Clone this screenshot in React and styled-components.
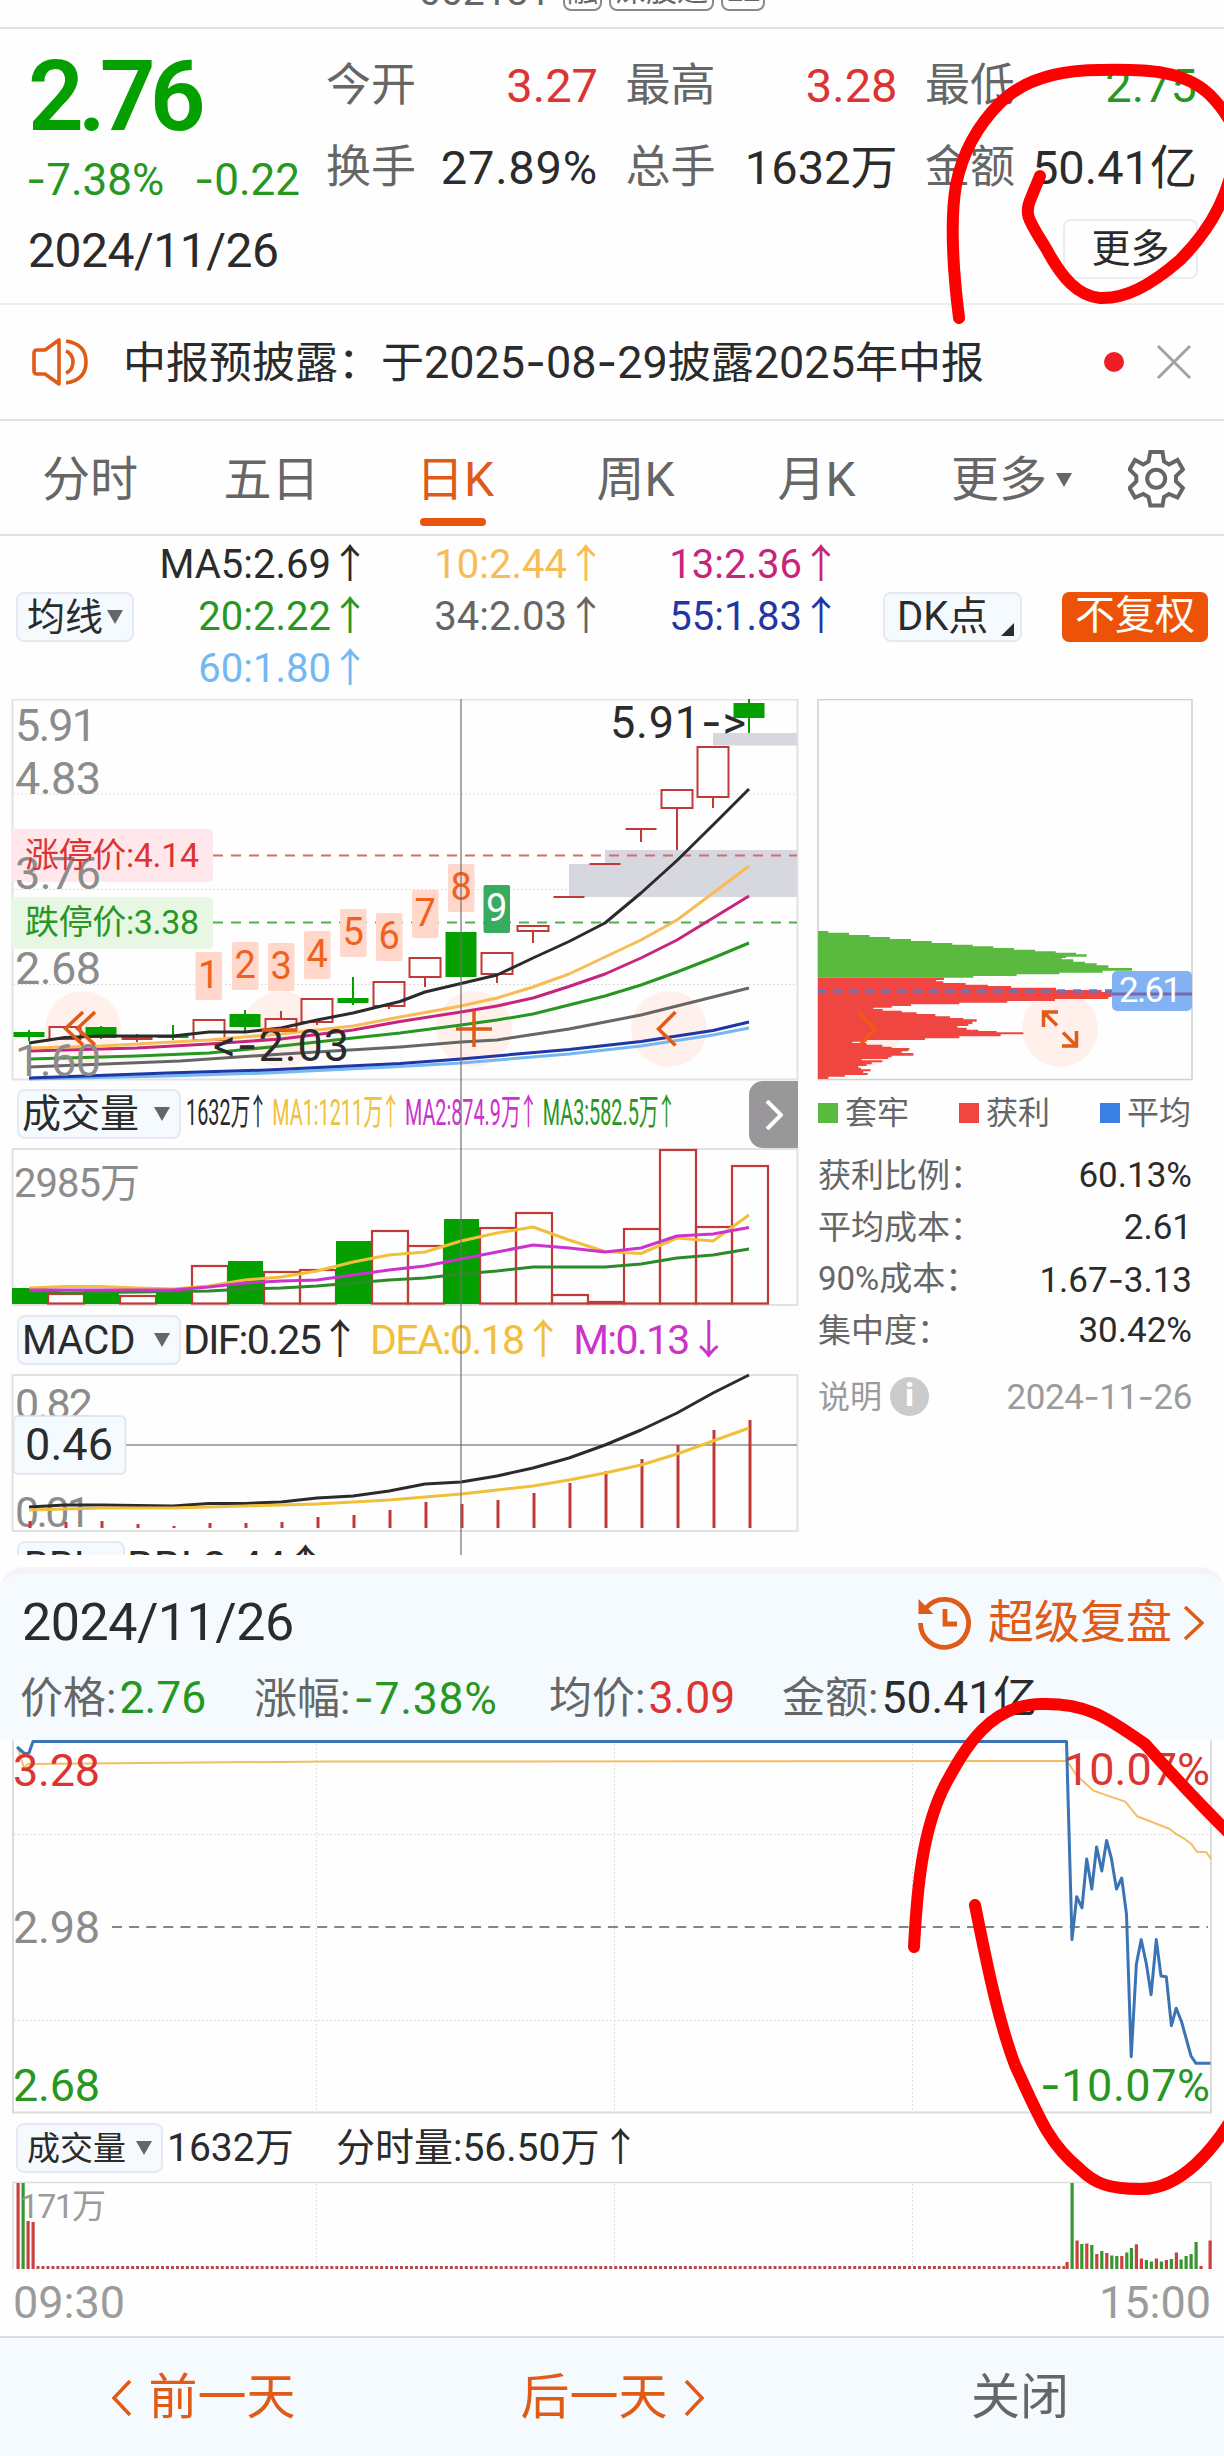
import React from "react";
import styled, { createGlobalStyle } from "styled-components";

const font = `Roboto, "Noto Sans CJK SC", sans-serif`;

const color = {
  text: "#2b2b2b",
  label: "#666666",
  faint: "#9b9b9b",
  red: "#dc3432",
  barRed: "#bf3a38",
  green: "#27971f",
  solidGreen: "#03a000",
  orange: "#e05a18",
  yellow: "#f0c03a",
  amber: "#f7bc55",
  magenta: "#c8247c",
  purple: "#cc33cc",
  navy: "#1f36a4",
  sky: "#72b8f2",
  frame: "#e2e2e2",
  panel: "#f5faff",
};

const GlobalStyle = createGlobalStyle`
  body {
    margin: 0;
    background-color: #fefefe;
    font-family: ${font};
    color: ${color.text};
  }
`;

const Page = styled.div`
  position: relative;
  width: 1224px;
  height: 2456px;
  overflow: hidden;
  white-space: nowrap;
  line-height: 1.2;
`;

const Dash = styled.span`
  font-family: Inter, sans-serif;
`;

const TopStrip = styled.div`
  box-sizing: border-box;
  height: 29px;
  border-bottom: 2px solid #e2e2e2;
  overflow: hidden;
`;

const CodeRow = styled.div`
  display: flex;
  align-items: center;
  gap: 7px;
  height: 38px;
  margin-top: -27px;
  padding-left: 419px;
  color: ${color.label};
`;

const StockCode = styled.div`
  width: 137px;
  font-size: 39px;
`;

const CodeTag = styled.div`
  box-sizing: border-box;
  width: ${(props) => props.$width}px;
  height: 38px;
  border: 2px solid #8a8a8a;
  border-radius: 8px;
  text-align: center;
  font-size: 31px;
  line-height: 32px;
`;

const QuoteSection = styled.div`
  box-sizing: border-box;
  display: flex;
  height: 276px;
  border-bottom: 2px solid #efefef;
`;

const QuoteLeft = styled.div`
  box-sizing: border-box;
  width: 326px;
  padding: 17px 0 0 28px;
`;

const Price = styled.div`
  height: 100px;
  line-height: 102px;
  font-size: 98px;
  font-weight: 600;
  letter-spacing: -6px;
  color: ${color.solidGreen};
`;

const Change = styled.div`
  display: flex;
  justify-content: space-between;
  width: 274px;
  height: 60px;
  margin: 4px 0 0 -2px;
  line-height: 59px;
  font-size: 44px;
  color: ${color.green};
`;

const QuoteDate = styled.div`
  height: 60px;
  margin-top: 10px;
  line-height: 61px;
  font-size: 48px;
  letter-spacing: -0.5px;
`;

const QuoteRight = styled.div`
  padding-top: 27px;
`;

const MetricGrid = styled.div`
  display: grid;
  grid-template-columns: 272px 272px 272px;
  column-gap: 27.5px;
  row-gap: 22px;
`;

const Metric = styled.div`
  display: flex;
  justify-content: space-between;
  height: 60px;
  line-height: 60px;
`;

const MetricLabel = styled.div`
  font-size: 45px;
  color: ${color.label};
`;

const MetricValue = styled.div`
  font-size: 47px;
  letter-spacing: ${(props) => props.$spacing || 0}px;
  color: ${(props) => props.$color || color.text};
`;

const MoreButton = styled.div`
  box-sizing: border-box;
  width: 135px;
  height: 60px;
  margin: 21px 0 0 737px;
  border: 2px solid #ececec;
  border-radius: 8px;
  text-align: center;
  line-height: 56px;
  font-size: 39px;
`;

const Notice = styled.div`
  box-sizing: border-box;
  display: flex;
  align-items: center;
  height: 116px;
  padding: 0 32px 0 32px;
  border-bottom: 2px solid #e2e2e2;
`;

const NoticeText = styled.div`
  flex: 1;
  margin-left: 34px;
  font-size: 43px;
`;

const NoticeDigits = styled.span`
  font-size: 45px;
`;

const RedDot = styled.div`
  width: 20px;
  height: 20px;
  margin-right: 32px;
  border-radius: 50%;
  background-color: #f01e24;
`;

const Tabs = styled.div`
  box-sizing: border-box;
  display: flex;
  height: 115px;
  border-bottom: 2px solid #e2e2e2;
`;

const Tab = styled.div`
  display: flex;
  flex-direction: column;
  align-items: center;
  width: ${(props) => props.$width}px;
  font-size: 48px;
  line-height: 60px;
  padding-top: 29px;
  box-sizing: border-box;
  color: ${(props) => (props.$active ? color.orange : color.label)};
`;

const TabLine = styled.div`
  width: 66px;
  height: 8px;
  margin-top: 8px;
  margin-right: 5px;
  border-radius: 4px;
  background-color: #e9530d;
`;

const TabRow = styled.div`
  display: flex;
  align-items: center;
  gap: 9px;
`;

const Triangle = styled.div`
  border-left: 8px solid transparent;
  border-right: 8px solid transparent;
  border-top: 14px solid #666666;
`;

const AverageSection = styled.div`
  display: flex;
  align-items: center;
  box-sizing: border-box;
  height: 163px;
  padding: 3px 0 4px 16px;
`;

const SelectButton = styled.div`
  box-sizing: border-box;
  display: flex;
  align-items: center;
  justify-content: space-between;
  width: ${(props) => props.$width}px;
  height: 50px;
  padding: 0 9px 0 ${(props) => props.$left}px;
  border: 2px solid #e6e9f2;
  border-radius: 8px;
  background-color: ${color.panel};
  font-size: ${(props) => props.$font || 38}px;
  line-height: 45px;
`;

const AverageGrid = styled.div`
  display: grid;
  grid-template-columns: 229px 236px 235px;
  grid-auto-rows: 52px;
  justify-items: end;
`;

const AverageItem = styled.div`
  line-height: 52px;
  font-size: 40px;
  color: ${(props) => props.$color};
`;

const ArrowText = styled.span`
  display: inline-flex;
  justify-content: center;
  width: ${(props) => props.$width || 26}px;
  margin-left: ${(props) => props.$left || 6}px;
  font-family: "Noto Sans CJK SC", sans-serif;
  line-height: 1;
  letter-spacing: 0;
`;

const DkButton = styled.div`
  box-sizing: border-box;
  display: flex;
  align-items: center;
  width: 139px;
  height: 50px;
  margin-left: 49px;
  padding-left: 12px;
  border: 2px solid #e6e9f2;
  border-radius: 8px;
  background-color: ${color.panel};
  font-size: 40px;
`;

const CornerMark = styled.div`
  margin: 24px 0 0 13px;
  border-left: 13px solid transparent;
  border-bottom: 13px solid #2b2b2b;
`;

const AdjustButton = styled.div`
  width: 146px;
  height: 50px;
  margin-left: 40px;
  border-radius: 7px;
  background-color: #ec5308;
  color: #ffffff;
  text-align: center;
  font-size: 40px;
  line-height: 48px;
`;

const ChartSection = styled.div`
  position: relative;
  display: flex;
  height: 856px;
  overflow: hidden;
  padding-left: 12px;
`;

const ChartColumn = styled.div`
  width: 786px;
  flex: none;
`;

const Chart = styled.svg`
  display: block;
  overflow: visible;
`;

const VolumeHead = styled.div`
  display: flex;
  height: 68px;
  padding-left: 5px;
  align-items: flex-start;
`;

const HeadButtonSlot = styled.div`
  padding-top: 9px;
`;

const CondensedRow = styled.div`
  display: flex;
  gap: 16px;
  width: 569px;
  height: 50px;
  margin: 8px 0 0 5px;
  line-height: 50px;
  font-size: 36px;
  transform: scaleX(0.55);
  transform-origin: left center;
`;

const Colored = styled.span`
  color: ${(props) => props.$color};
  margin-right: ${(props) => props.$right || 0}px;
`;

const NextPane = styled.div`
  display: flex;
  align-items: center;
  justify-content: center;
  flex: none;
  width: 49px;
  height: 67px;
  margin: 1px 0 0 -6px;
  border-radius: 14px 0 0 14px;
  background-color: #99979a;
`;

const IndicatorHead = styled.div`
  display: flex;
  height: 50px;
  padding: 9px 0 9px 5px;
  line-height: 50px;
  font-size: ${(props) => props.$font || 43}px;
`;

const IndicatorValues = styled.div`
  padding-left: 2px;
  letter-spacing: ${(props) => props.$spacing || 0}px;
`;

const CrossLine = styled.div`
  position: absolute;
  left: 460px;
  top: 0;
  width: 2px;
  height: 856px;
  background-color: rgba(110, 110, 110, 0.6);
`;

const ChipColumn = styled.div`
  width: 376px;
  margin-left: 19px;
`;

const Legend = styled.div`
  display: flex;
  justify-content: space-between;
  height: 70px;
  padding: 0 2px 0 1px;
`;

const LegendItem = styled.div`
  display: flex;
  align-items: center;
  gap: 7px;
  height: 66px;
  font-size: 32px;
  color: ${color.label};
`;

const LegendSquare = styled.div`
  width: 20px;
  height: 20px;
  background-color: ${(props) => props.$color};
`;

const ChipRow = styled.div`
  display: flex;
  justify-content: space-between;
  height: 51.7px;
  line-height: 52px;
  padding: 0 1px 0 1px;
  font-size: 33px;
  color: ${color.label};
`;

const ChipValue = styled.div`
  font-size: 35px;
  color: ${color.text};
`;

const ChipFoot = styled.div`
  display: flex;
  align-items: center;
  height: 52px;
  margin-top: 14px;
  padding: 0 1px 0 1px;
  font-size: 32px;
  color: ${color.faint};
`;

const InfoIcon = styled.div`
  width: 39px;
  height: 39px;
  margin-left: 8px;
  border-radius: 50%;
  background-color: #cbcbcb;
  color: #ffffff;
  text-align: center;
  font-size: 31px;
  font-weight: 900;
  line-height: 38px;
`;

const ChipDate = styled.div`
  flex: 1;
  text-align: right;
  font-size: 35px;
  letter-spacing: -0.4px;
`;

const Sheet = styled.div`
  margin-top: 12px;
  border-top: 7px solid #f6f3f6;
  border-radius: 24px 24px 0 0;
  background-color: ${color.panel};
`;

const SheetHead = styled.div`
  box-sizing: border-box;
  display: flex;
  align-items: center;
  justify-content: space-between;
  height: 96px;
  padding: 2px 20px 0 22px;
`;

const SheetDate = styled.div`
  font-size: 52px;
  letter-spacing: -0.5px;
`;

const ReplayLink = styled.div`
  display: flex;
  align-items: center;
  font-size: 46px;
  color: ${color.orange};

  span {
    margin: 0 11px 0 16px;
  }
`;

const SheetStats = styled.div`
  display: flex;
  height: 70px;
  padding-left: 20px;
  line-height: 56px;
`;

const SheetStat = styled.div`
  width: ${(props) => props.$width}px;
  font-size: 43px;
  color: ${color.label};
`;

const StatValue = styled.span`
  margin-left: 3px;
  font-size: 44.5px;
  letter-spacing: ${(props) => props.$spacing || 0}px;
  color: ${(props) => props.$color};
`;

const SheetBody = styled.div`
  padding-left: 12px;
  background-color: #fefefe;
`;

const TradeHead = styled.div`
  display: flex;
  align-items: center;
  height: 68px;
  padding-left: 4px;
  font-size: 39px;
  line-height: 48px;
`;

const TradeTotal = styled.div`
  width: 169px;
  margin-left: 4px;
`;

const TimeAxis = styled.div`
  display: flex;
  justify-content: space-between;
  height: 67px;
  padding: 0 13px 0 1px;
  line-height: 68px;
  font-size: 45px;
  color: ${color.faint};
`;

const Footer = styled.div`
  box-sizing: border-box;
  display: flex;
  height: 121px;
  border-top: 2px solid #d8dbdf;
  background-color: ${color.panel};
`;

const FooterButton = styled.div`
  display: flex;
  align-items: center;
  justify-content: center;
  gap: 16px;
  width: 408px;
  height: 119px;
  font-size: 49px;
  line-height: 60px;
  color: ${(props) => props.$color || color.orange};
`;

const Marks = styled.svg`
  position: absolute;
  left: 0;
  top: 0;
  pointer-events: none;
`;

const averages = [
  ["MA5:2.69", color.text],
  ["10:2.44", color.amber],
  ["13:2.36", color.magenta],
  ["20:2.22", color.green],
  ["34:2.03", color.label],
  ["55:1.83", color.navy],
  ["60:1.80", color.sky],
];

// x, body top, body bottom, high, low, kind (g = solid green, r = hollow red, f = filled red)
const candles = [
  [29, 1032, 1037, 1030, 1041, "g"],
  [65, 1027, 1039, 1027, 1039, "r"],
  [101, 1027, 1038, 1026, 1039, "g"],
  [137, 1035, 1040, 1034, 1042, "f"],
  [173, 1035, 1038, 1025, 1040, "g"],
  [209, 1020, 1040, 1020, 1040, "r"],
  [245, 1014, 1027, 1010, 1031, "g"],
  [281, 1019, 1031, 1011, 1031, "r"],
  [317, 999, 1022, 999, 1025, "r"],
  [353, 998, 1003, 977, 1005, "g"],
  [389, 982, 1006, 982, 1009, "r"],
  [425, 958, 977, 958, 987, "r"],
  [461, 932, 977, 932, 977, "g"],
  [497, 953, 974, 953, 983, "r"],
  [533, 926, 931, 926, 943, "r"],
  [569, 896, 898, 896, 898, "f"],
  [605, 863, 865, 863, 865, "f"],
  [641, 828, 830, 828, 842, "f"],
  [677, 790, 808, 790, 850, "r"],
  [713, 747, 797, 747, 808, "r"],
  [749, 703, 718, 699, 733, "g"],
];

const priceLines = [
  [color.sky, "29,1079 167,1076 267,1073 400,1066.5 461,1063 569,1054 641,1046 713,1035 749,1028"],
  [color.navy, "29,1078 167,1073 267,1070 400,1063.5 461,1059 569,1049.5 641,1041.5 713,1030.5 749,1022"],
  ["#666666", "29,1067 180,1061 283,1054 400,1047 461,1042 497,1040 569,1029 641,1015 713,997 749,988"],
  [color.green, "29,1059 137,1056 209,1053 281,1046 353,1038 400,1033 461,1025 497,1020 533,1014 569,1005 605,996 641,985 677,972 713,958 749,943"],
  [color.magenta, "29,1051 137,1048 209,1044 281,1039 353,1030 400,1021.5 461,1012 497,1006 533,998 569,986.5 605,974 641,958 677,940 713,918 749,896"],
  [color.amber, "29,1048 101,1046 209,1040 281,1034 353,1026 400,1017 461,1006 497,998 533,987 569,974 605,957 641,940 677,920 713,893 749,866"],
  [color.text, "29,1043 65,1037.5 101,1036 173,1036 209,1032 245,1032 281,1028 317,1020 353,1013 400,1001.5 425,992 461,983.5 497,975 533,958 569,941.5 605,923 641,893 677,860.5 713,825 749,789"],
];

const counters = [
  [1, 195.5, 952],
  [2, 232, 942],
  [3, 268, 943],
  [4, 304, 931],
  [5, 340, 909],
  [6, 376, 913],
  [7, 412, 890],
  [8, 448, 864],
  [9, 483.5, 885],
];

// volume bars: x, top, kind
const volumes = [
  [29, 1288, "g"], [65, 1294, "r"], [101, 1290, "g"], [137, 1296, "r"],
  [173, 1289, "g"], [209, 1266, "r"], [245, 1261, "g"], [281, 1272, "r"],
  [317, 1270, "r"], [353, 1241, "g"], [389, 1231, "r"], [425, 1246, "r"],
  [461, 1219, "g"], [497, 1228, "r"], [533, 1213, "r"], [569, 1295, "r"],
  [605, 1302, "r"], [641, 1229, "r"], [677, 1150, "r"], [713, 1227, "r"],
  [749, 1166, "r"],
];

const volumeLines = [
  ["#2d8a28", "29,1291 65,1293 137,1292 209,1291 245,1289 281,1288 317,1286 389,1280 425,1278 461,1274 497,1271 533,1267 605,1267 641,1264 677,1258 713,1255 749,1249"],
  [color.yellow, "29,1288 65,1286.5 101,1286.5 137,1288 173,1289 209,1286 245,1280 281,1277 317,1271 353,1262 389,1255 425,1252 461,1241 497,1233 533,1227 569,1240 605,1251.5 641,1253.5 677,1238 713,1241 749,1215"],
  [color.purple, "29,1290 173,1290 209,1287 245,1283 281,1281 317,1280 353,1275 389,1270 425,1266 461,1259 497,1252 533,1245 569,1248 605,1252 641,1248 677,1236 713,1234 749,1227.5"],
];

const macdBars = [
  1521, 1522, 1521, 1524, 1526, 1523, 1523, 1522, 1517, 1515, 1510, 1502,
  1504, 1500, 1493, 1483, 1471, 1459, 1445, 1430, 1420,
];

// chip distribution steps in thirds of a px: bar top, bar end
const chipsGreen = [
  [723, 85], [728, 147], [735, 209], [741, 270], [747, 333], [753, 395],
  [759, 457], [764, 518], [769, 580], [774, 642], [779, 705], [784, 767],
  [788, 828], [793, 860], [800, 798], [804, 785], [808, 820], [815, 855],
  [820, 890], [826, 925], [834, 996], [842, 908], [848, 778], [853, 650],
  [858, 520], [863, 54],
];
const chipsRed = [
  [863, 432], [870, 408], [874, 430], [879, 497], [884, 564], [888, 633],
  [893, 768], [900, 905], [906, 935], [910, 1175], [916, 935], [921, 925],
  [927, 765], [933, 622], [938, 478], [943, 333], [948, 275], [953, 220],
  [957, 248], [962, 305], [967, 350], [972, 406], [979, 450], [984, 490],
  [988, 530], [995, 517], [1002, 505], [1008, 472], [1013, 500], [1019, 535],
  [1023, 590], [1027, 670], [1033, 602], [1039, 478], [1045, 375], [1050, 200],
  [1055, 157], [1059, 200], [1064, 247], [1070, 275], [1074, 328], [1080, 325],
  [1084, 305], [1089, 340], [1097, 275], [1102, 265], [1107, 185], [1111, 247],
  [1117, 215], [1123, 200], [1128, 175], [1133, 183], [1138, 212], [1144, 190],
  [1149, 203], [1155, 135], [1160, 85], [1167, 54],
];

const steps = (rows) =>
  rows.reduce((d, [y, x]) => `${d}V${y}H${x}`, "M54 " + rows[0][0]) + "H54z";

const intraday =
  "17,1747 25,1754 29,1753 33,1741.5 1066.5,1741.5 1072,1939.6 1076.7,1896.7 1082,1907.8 1086.7,1859 1091.8,1889 1096.6,1847 1101.8,1871 1106.6,1840.4 1111.3,1858 1116.5,1889 1121.7,1878 1126.5,1914.3 1131.2,2056.7 1136.4,1964 1141.2,1939.6 1146.4,1964 1151.1,1994.7 1156.3,1939.6 1161,1976 1166.3,1976.7 1171.4,2025.7 1176.2,2008.2 1181.4,2021.2 1191,2056 1196,2063.3 1210.5,2063.3";

const intradayAverage =
  "18,1748 24,1768 28,1764 330,1761.5 1067,1761 1076.7,1775.5 1093.4,1790.6 1113.3,1797.6 1125.3,1801.6 1137.2,1816.3 1155.1,1823.3 1169.8,1829 1177,1834.7 1185,1839.2 1191,1843.7 1197,1851.8 1206.4,1852.2 1211,1859";

const trades = [
  [18, 2183, "r"], [23, 2183, "g"], [28, 2221, "r"], [33, 2222, "r"],
  [1067, 2262, "r"], [1072, 2183, "g"], [1077, 2240.5, "r"], [1081.7, 2244, "g"],
  [1086.7, 2243.5, "r"], [1091.7, 2245, "g"], [1096.7, 2254, "r"], [1101.7, 2251, "g"],
  [1106.7, 2253, "r"], [1111.7, 2255.5, "g"], [1116.7, 2256, "g"], [1121.7, 2256, "r"],
  [1126.7, 2252.5, "g"], [1131.3, 2248, "g"], [1136.3, 2244.3, "r"], [1141.3, 2258.5, "r"],
  [1146.3, 2260, "g"], [1151.3, 2261.5, "g"], [1156.3, 2258.5, "r"], [1161.3, 2261.5, "g"],
  [1166.3, 2260, "r"], [1171.3, 2259, "g"], [1176.3, 2252.5, "r"], [1181, 2259.5, "g"],
  [1186, 2256, "g"], [1191, 2254, "g"], [1196, 2242, "g"], [1201, 2266, "r"],
  [1210, 2240.5, "r"],
];

const Line = ({ points, stroke, width = 3 }) => (
  <polyline
    points={points}
    fill="none"
    stroke={stroke}
    strokeWidth={width}
    strokeLinejoin="round"
  />
);

const Chevron = ({ left, width = 20, height = 36, stroke = color.orange, weight = 3.5 }) => (
  <svg width={width} height={height}>
    <polyline
      points={
        left
          ? `${width - 2},1 2,${height / 2} ${width - 2},${height - 1}`
          : `2,1 ${width - 2},${height / 2} 2,${height - 1}`
      }
      fill="none"
      stroke={stroke}
      strokeWidth={weight}
    />
  </svg>
);

const SpeakerIcon = () => (
  <svg width="57" height="50" viewBox="0 0 57 50" fill="none" stroke={color.orange} strokeWidth="3.6" strokeLinejoin="round">
    <path d="M27 3v44L13 37H5q-3 0-3-3V16q0-3 3-3h8z" />
    <path d="M34 14q7 3 7 11t-7 11" />
    <path d="M34 4q20 3 20 21t-20 21" />
  </svg>
);

const GearIcon = () => (
  <svg width="57" height="58" viewBox="0 0 57 58" fill="none" stroke="#666666" strokeWidth="4">
    <path d="M22.3 2H34.500L36 11.500 41 14.500 49.500 10 55 19.500 48 26V31.500L55 38 49.500 47.500 41 44 36 47 34.500 55.500H22.300L20.500 47 15.300 44 7 47.500 1.500 38 8.300 31.500V26L1.500 19.500 7 10 15.300 14.500 20.500 11.500z" />
    <circle cx="28.200" cy="28.700" r="9" />
  </svg>
);

const ReplayIcon = () => (
  <svg width="55" height="56" viewBox="0 0 55 56" fill="none" stroke={color.orange} strokeWidth="4.8">
    <path d="M3.500 28A24 24 0 1 0 9 13" />
    <path d="M1.500 4v15h15z" fill={color.orange} stroke="none" />
    <path d="M28 14v15h12" />
  </svg>
);

const KChart = () => (
  <Chart width="786" height="381" viewBox="12 699 786 381" fontFamily={font}>
    <rect x="12.5" y="699.5" width="785" height="380" fill="none" stroke={color.frame} strokeWidth="2" />
    {[794, 889.5, 984.5].map((y) => (
      <line key={y} x1="13" x2="797" y1={y} y2={y} stroke="#d4d4d4" strokeDasharray="1.5 2.5" />
    ))}
    <g fill="#d7d7e0">
      <rect x="713" y="733" width="84" height="12.5" />
      <rect x="605" y="850" width="192" height="15" />
      <rect x="569" y="864" width="228" height="33" />
    </g>
    <line x1="213" x2="797" y1="855.5" y2="855.5" stroke="#cf6f6c" strokeWidth="1.8" strokeDasharray="10 8" />
    <line x1="213" x2="797" y1="922.5" y2="922.5" stroke="#55ad50" strokeWidth="1.8" strokeDasharray="10 8" />
    {[83, 281, 474, 669].map((x) => (
      <circle key={x} cx={x} cy="1029" r="38" fill="#fff0eb" />
    ))}
    {counters.map(([n, x, y]) => (
      <g key={n}>
        <rect x={x} y={y} width="26.5" height="48" rx="2" fill={n === 9 ? "#37ab5f" : "#ffd8cb"} />
        <text x={x + 13.3} y={y + 36} fontSize="38" textAnchor="middle" fill={n === 9 ? "#ffffff" : "#f0611f"}>
          {n}
        </text>
      </g>
    ))}
    {candles.map(([x, top, bottom, high, low, kind]) => {
      const stroke = kind === "g" ? color.solidGreen : color.barRed;
      return (
        <g key={x} stroke={stroke} strokeWidth="2">
          <line x1={x} x2={x} y1={high} y2={top} />
          <line x1={x} x2={x} y1={bottom} y2={low} />
          {kind === "r" ? (
            <rect x={x - 15.5} y={top} width="31" height={bottom - top} fill="#fefefe" fillOpacity="0.6" />
          ) : (
            <rect x={x - 15.5} y={top} width="31" height={bottom - top} fill={stroke} stroke="none" />
          )}
        </g>
      );
    })}
    {priceLines.map(([stroke, points]) => (
      <Line key={stroke} stroke={stroke} points={points} />
    ))}
    <path d="M12 829h196q5 0 5 5v43q0 5-5 5H12z" fill="#ffe7eb" />
    <path d="M12 897h196q5 0 5 5v42q0 5-5 5H12z" fill="#e8f6e4" />
    <g fontSize="45" fill="#8c8c8c">
      <text x="15" y="741" textLength="82">5.91</text>
      <text x="15" y="793.5" textLength="86">4.83</text>
      <text x="15" y="889" textLength="86">3.76</text>
      <text x="15" y="984" textLength="86">2.68</text>
      <text x="15" y="1076" textLength="86">1.60</text>
    </g>
    <text x="25" y="867" fontSize="34" fill={color.red} textLength="174">涨停价:4.14</text>
    <text x="25" y="934" fontSize="34" fill={color.green} textLength="174">跌停价:3.38</text>
    <text x="213" y="1061" fontSize="45" fill={color.text} textLength="136">
      {"<"}<tspan fontFamily="Inter">-</tspan>2.03
    </text>
    <text x="610" y="738" fontSize="45" fill={color.text} textLength="136">
      5.91<tspan fontFamily="Inter">-</tspan>{">"}
    </text>
    <g fill="none" stroke={color.orange} strokeWidth="3.5">
      <polyline points="83,1012 65.5,1028.5 83,1045" />
      <polyline points="95,1012 77.5,1028.5 95,1045" />
      <line x1="262" x2="297" y1="1030" y2="1030" />
      <path d="M456 1029h36M474 1011v36" />
      <polyline points="675.5,1012 658.5,1029 675.5,1045.5" />
    </g>
  </Chart>
);

const VolumeChart = () => (
  <Chart width="786" height="158" viewBox="12 1148 786 158" fontFamily={font}>
    <rect x="12.5" y="1149" width="785" height="156" fill="none" stroke={color.frame} strokeWidth="2" />
    <text x="14" y="1197" fontSize="40" fill="#8c8c8c" textLength="126">2985万</text>
    {volumes.map(([x, top, kind]) =>
      kind === "g" ? (
        <rect key={x} x={x - 17} y={top} width="35" height={1304 - top} fill={color.solidGreen} />
      ) : (
        <rect key={x} x={x - 17} y={top} width="36" height={1303.5 - top} fill="none" stroke={color.barRed} strokeWidth="2.2" />
      )
    )}
    {volumeLines.map(([stroke, points]) => (
      <Line key={stroke} stroke={stroke} points={points} />
    ))}
  </Chart>
);

const MacdChart = () => (
  <Chart width="786" height="158" viewBox="12 1374 786 158" fontFamily={font}>
    <rect x="12.5" y="1375" width="785" height="156" fill="none" stroke={color.frame} strokeWidth="2" />
    <g fontSize="43" fill="#8c8c8c">
      <text x="15" y="1419" textLength="78">0.82</text>
      <text x="15" y="1527" textLength="76">0.01</text>
    </g>
    <line x1="126" x2="797" y1="1445" y2="1445" stroke="#8b8b8b" strokeWidth="1.5" />
    {macdBars.map((top, i) => (
      <rect key={i} x={28.5 + i * 36} y={top} width="3" height={1528 - top} fill={color.barRed} />
    ))}
    <Line stroke={color.text} points="29,1507 65,1505 101,1505 173,1506 209,1503.5 245,1503.5 281,1502 317,1498 353,1496 389,1491 425,1484 461,1482 497,1476 533,1468 569,1458 605,1445 641,1430 677,1413 713,1393 749,1375" />
    <Line stroke={color.yellow} points="29,1510 101,1508 173,1508 245,1506 317,1504 353,1502 389,1500 425,1497 461,1494 497,1490 533,1486 569,1480 605,1473 641,1465 677,1454 713,1441 749,1428" />
    <rect x="13.5" y="1416" width="112" height="58" rx="5" fill={color.panel} stroke="#dde1ea" strokeWidth="1.5" />
    <text x="25" y="1460" fontSize="45" fill={color.text} textLength="88">0.46</text>
  </Chart>
);

const ChipChart = () => (
  <Chart width="376" height="381" viewBox="817 699 376 381" fontFamily={font}>
    <rect x="818" y="699.5" width="374" height="380" fill="none" stroke="#d2d2d2" strokeWidth="1.6" />
    <circle cx="863" cy="1029" r="38" fill="#fff0eb" />
    <circle cx="1060" cy="1029" r="38" fill="#fff0eb" />
    <g transform="translate(800 690) scale(0.33333)">
      <path d={steps(chipsGreen)} fill="#5aba40" />
      <path d={steps(chipsRed)} fill="#ef4642" />
    </g>
    <line x1="818" x2="1112" y1="991" y2="991" stroke="#5d78c9" strokeWidth="3.5" strokeDasharray="8 8" strokeDashoffset="1" />
    <rect x="1112" y="971" width="80" height="40" rx="5" fill="#82b2f4" />
    <line x1="1112" x2="1192" y1="994" y2="994" stroke="#7868ab" strokeWidth="3" />
    <text x="1119" y="1002" fontSize="35" fill="#ffffff" textLength="63">2.61</text>
    <g fill="none" stroke={color.orange} strokeWidth="3.5">
      <polyline points="858.5,1012 875.5,1029 859.5,1045.5" stroke="#f05a12" />
      <path d="M1058 1012h-14.5v15M1044 1012.500l13 13M1062 1046h14.500v-15M1076 1045.500l-13-13" />
    </g>
  </Chart>
);

const IntradayChart = () => (
  <Chart width="1200" height="374" viewBox="12 1740 1200 374" fontFamily={font}>
    <path d="M13 1740v372.500h1198v-372.500" fill="none" stroke="#dcdcdc" strokeWidth="2" />
    <g stroke="#d6d6d6" strokeDasharray="1.5 2.5">
      <path d="M316.500 1744v367M614.500 1744v367M912.500 1744v367M14 1834.500h1196M14 2020.500h1196" />
    </g>
    <line x1="112" x2="1208" y1="1927" y2="1927" stroke="#858585" strokeWidth="1.8" strokeDasharray="10 7.1" />
    <Line stroke="#f2bf62" points={intradayAverage} width={2} />
    <Line stroke="#3b74b5" points={intraday} />
    <g fontSize="45">
      <text x="13" y="1786" fill={color.red} textLength="87">3.28</text>
      <text x="13" y="1943" fill="#8c8c8c" textLength="87">2.98</text>
      <text x="13" y="2101" fill={color.green} textLength="87">2.68</text>
      <text x="1064" y="1785" fill={color.red} textLength="146">10.07%</text>
      <text x="1040" y="2101" fill={color.green} textLength="170">
        <tspan fontFamily="Inter">-</tspan>10.07%
      </text>
    </g>
  </Chart>
);

const TradeChart = () => (
  <Chart width="1200" height="87" viewBox="12 2182 1200 87" fontFamily={font}>
    <path d="M13 2269v-86.500h1198v86.500" fill="none" stroke="#dedede" strokeWidth="1.6" />
    <path d="M316.500 2184v84M614.500 2184v84M912.500 2184v84" stroke="#d6d6d6" strokeDasharray="1.5 2.5" />
    <line x1="36.500" x2="1065" y1="2267.500" y2="2267.500" stroke="#b64a49" strokeWidth="3" strokeDasharray="3 1.98" />
    {trades.map(([x, top, kind]) => (
      <rect key={x} x={x - 1.5} y={top} width="3.2" height={2269 - top} fill={kind === "g" ? "#36962f" : "#cc4140"} />
    ))}
    <text x="20" y="2218" fontSize="34" fill="#9b9b9b" textLength="86">171万</text>
  </Chart>
);

const App = () => {
  return (
    <Page>
      <GlobalStyle />
      <TopStrip>
        <CodeRow>
          <StockCode>002131</StockCode>
          <CodeTag $width={39}>融</CodeTag>
          <CodeTag $width={105}>深股通</CodeTag>
          <CodeTag $width={44}>L2</CodeTag>
        </CodeRow>
      </TopStrip>

      <QuoteSection>
        <QuoteLeft>
          <Price>2.76</Price>
          <Change>
            <span><Dash>-</Dash>7.38%</span>
            <span><Dash>-</Dash>0.22</span>
          </Change>
          <QuoteDate>2024/11/26</QuoteDate>
        </QuoteLeft>
        <QuoteRight>
          <MetricGrid>
            <Metric>
              <MetricLabel>今开</MetricLabel>
              <MetricValue $color={color.red}>3.27</MetricValue>
            </Metric>
            <Metric>
              <MetricLabel>最高</MetricLabel>
              <MetricValue $color={color.red}>3.28</MetricValue>
            </Metric>
            <Metric>
              <MetricLabel>最低</MetricLabel>
              <MetricValue $color={color.green}>2.75</MetricValue>
            </Metric>
            <Metric>
              <MetricLabel>换手</MetricLabel>
              <MetricValue $spacing={0.8}>27.89%</MetricValue>
            </Metric>
            <Metric>
              <MetricLabel>总手</MetricLabel>
              <MetricValue>1632万</MetricValue>
            </Metric>
            <Metric>
              <MetricLabel>金额</MetricLabel>
              <MetricValue>50.41亿</MetricValue>
            </Metric>
          </MetricGrid>
          <MoreButton>更多</MoreButton>
        </QuoteRight>
      </QuoteSection>

      <Notice>
        <SpeakerIcon />
        <NoticeText>
          中报预披露：于
          <NoticeDigits>
            2025<Dash>-</Dash>08<Dash>-</Dash>29
          </NoticeDigits>
          披露<NoticeDigits>2025</NoticeDigits>年中报
        </NoticeText>
        <RedDot />
        <svg width="36" height="36" stroke="#a2a2a2" strokeWidth="3">
          <path d="M2 2l32 32M34 2L2 34" />
        </svg>
      </Notice>

      <Tabs>
        <Tab $width={180}>分时</Tab>
        <Tab $width={183}>五日</Tab>
        <Tab $width={184} $active>
          日K
          <TabLine />
        </Tab>
        <Tab $width={177}>周K</Tab>
        <Tab $width={185}>月K</Tab>
        <Tab $width={205}>
          <TabRow>
            更多
            <Triangle />
          </TabRow>
        </Tab>
        <Tab $width={84}>
          <GearIcon />
        </Tab>
      </Tabs>

      <AverageSection>
        <SelectButton $width={118} $left={9}>
          均线
          <Triangle />
        </SelectButton>
        <AverageGrid>
          {averages.map(([text, c]) => (
            <AverageItem key={text} $color={c}>
              {text}
              <ArrowText>↑</ArrowText>
            </AverageItem>
          ))}
        </AverageGrid>
        <DkButton>
          DK点
          <CornerMark />
        </DkButton>
        <AdjustButton>不复权</AdjustButton>
      </AverageSection>

      <ChartSection>
        <ChartColumn>
          <KChart />
          <VolumeHead>
            <HeadButtonSlot>
              <SelectButton $width={164} $left={3} $font={39}>
                成交量
                <Triangle />
              </SelectButton>
            </HeadButtonSlot>
            <CondensedRow>
              <span>1632万<ArrowText $width={20} $left={4}>↑</ArrowText></span>
              <Colored $color={color.yellow}>MA1:1211万<ArrowText $width={20} $left={4}>↑</ArrowText></Colored>
              <Colored $color={color.purple}>MA2:874.9万<ArrowText $width={20} $left={4}>↑</ArrowText></Colored>
              <Colored $color={color.green}>MA3:582.5万<ArrowText $width={20} $left={4}>↑</ArrowText></Colored>
            </CondensedRow>
            <NextPane>
              <Chevron stroke="#ffffff" width={18} height={30} weight={4} />
            </NextPane>
          </VolumeHead>
          <VolumeChart />
          <IndicatorHead $font={41}>
            <SelectButton $width={164} $left={3} $font={40}>
              MACD
              <Triangle />
            </SelectButton>
            <IndicatorValues $spacing={-1.7}>
              <Colored $color={color.text} $right={16}>DIF:0.25<ArrowText $width={28}>↑</ArrowText></Colored>
              <Colored $color={color.yellow} $right={16}>DEA:0.18<ArrowText $width={28}>↑</ArrowText></Colored>
              <Colored $color={color.purple}>M:0.13<ArrowText $width={28}>↓</ArrowText></Colored>
            </IndicatorValues>
          </IndicatorHead>
          <MacdChart />
          <IndicatorHead>
            <SelectButton $width={108} $left={5} $font={40}>
              BBI
              <Triangle />
            </SelectButton>
            <IndicatorValues>
              BBI:2.44<ArrowText>↑</ArrowText>
            </IndicatorValues>
          </IndicatorHead>
        </ChartColumn>
        <ChipColumn>
          <ChipChart />
          <Legend>
            <LegendItem>
              <LegendSquare $color="#5aba40" />
              套牢
            </LegendItem>
            <LegendItem>
              <LegendSquare $color="#ef4642" />
              获利
            </LegendItem>
            <LegendItem>
              <LegendSquare $color="#3a80e4" />
              平均
            </LegendItem>
          </Legend>
          <ChipRow>
            获利比例：<ChipValue>60.13%</ChipValue>
          </ChipRow>
          <ChipRow>
            平均成本：<ChipValue>2.61</ChipValue>
          </ChipRow>
          <ChipRow>
            90%成本：<ChipValue>1.67<Dash>-</Dash>3.13</ChipValue>
          </ChipRow>
          <ChipRow>
            集中度：<ChipValue>30.42%</ChipValue>
          </ChipRow>
          <ChipFoot>
            说明
            <InfoIcon>i</InfoIcon>
            <ChipDate>
              2024<Dash>-</Dash>11<Dash>-</Dash>26
            </ChipDate>
          </ChipFoot>
        </ChipColumn>
        <CrossLine />
      </ChartSection>

      <Sheet>
        <SheetHead>
          <SheetDate>2024/11/26</SheetDate>
          <ReplayLink>
            <ReplayIcon />
            <span>超级复盘</span>
            <Chevron width={21} height={34} />
          </ReplayLink>
        </SheetHead>
        <SheetStats>
          <SheetStat $width={234}>
            价格:<StatValue $color={color.green}>2.76</StatValue>
          </SheetStat>
          <SheetStat $width={295}>
            涨幅:<StatValue $color={color.green} $spacing={0.7}><Dash>-</Dash>7.38%</StatValue>
          </SheetStat>
          <SheetStat $width={233}>
            均价:<StatValue $color={color.red}>3.09</StatValue>
          </SheetStat>
          <SheetStat $width={260}>
            金额:<StatValue $color={color.text}>50.41亿</StatValue>
          </SheetStat>
        </SheetStats>
        <SheetBody>
          <IntradayChart />
          <TradeHead>
            <SelectButton $width={147} $left={9} $font={33}>
              成交量
              <Triangle />
            </SelectButton>
            <TradeTotal>1632万</TradeTotal>
            <div>
              分时量:56.50万
              <ArrowText $left={8}>↑</ArrowText>
            </div>
          </TradeHead>
          <TradeChart />
          <TimeAxis>
            <span>09:30</span>
            <span>15:00</span>
          </TimeAxis>
        </SheetBody>
      </Sheet>

      <Footer>
        <FooterButton>
          <Chevron left />
          前一天
        </FooterButton>
        <FooterButton>
          后一天
          <Chevron />
        </FooterButton>
        <FooterButton $color="#666666">关闭</FooterButton>
      </Footer>

      <Marks width="1224" height="2456" fill="none" stroke="#ff0000" strokeWidth="12" strokeLinecap="round" strokeLinejoin="round">
        <path d="M959 318C953 270 950 220 956 185C963 150 978 125 1000 103C1025 78 1060 70 1100 70C1150 69 1185 71 1210 95Q1225 110 1236 132" />
        <path d="M1236 150C1230 190 1215 225 1180 260C1150 286 1125 299 1100 298C1078 296 1062 278 1047 250C1030 222 1023 215 1031 198L1040 176" />
        <path d="M914 1947C917 1890 922 1830 945 1785C965 1748 990 1704 1042 1704C1090 1703 1110 1720 1145 1744C1170 1772 1195 1800 1236 1840" />
        <path d="M975 1905C986 1960 998 2020 1015 2065C1040 2120 1050 2145 1080 2169C1095 2184 1110 2189 1140 2189C1180 2190 1215 2150 1240 2105" />
      </Marks>
    </Page>
  );
};

export default App;
